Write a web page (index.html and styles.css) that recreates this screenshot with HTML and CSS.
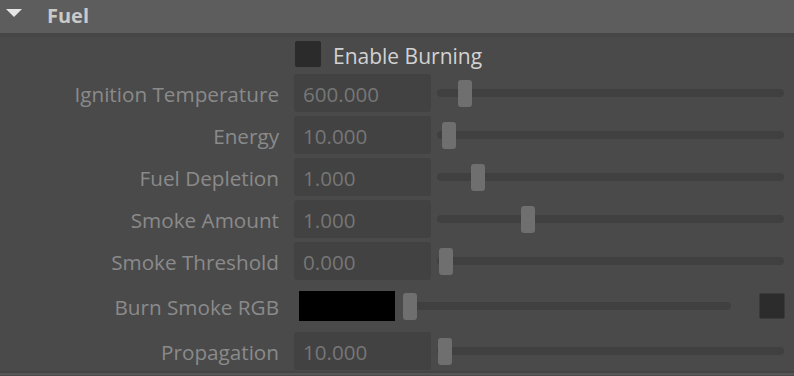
FILE: index.html
```html
<!DOCTYPE html>
<html>
<head>
<meta charset="utf-8">
<link rel="stylesheet" href="styles.css">
</head>
<body>
<div class="panel">
  <div class="header">
    <svg class="arrow" width="16" height="8" viewBox="0 0 16 8"><polygon points="0,0 16,0 8,8" fill="#e6e6e6"/></svg>
    <span class="title">Fuel</span>
  </div>
  <div class="body">
    <div class="check-row">
      <span class="checkbox"></span>
      <span class="check-label">Enable Burning</span>
    </div>
    <div class="rows">
      <div class="row">
        <span class="label">Ignition Temperature</span>
        <span class="field">600.000</span>
        <div class="slider"><span class="track"></span><span class="handle" style="left:21px"></span></div>
      </div>
      <div class="row">
        <span class="label">Energy</span>
        <span class="field">10.000</span>
        <div class="slider"><span class="track"></span><span class="handle" style="left:5px"></span></div>
      </div>
      <div class="row">
        <span class="label">Fuel Depletion</span>
        <span class="field">1.000</span>
        <div class="slider"><span class="track"></span><span class="handle" style="left:34px"></span></div>
      </div>
      <div class="row">
        <span class="label">Smoke Amount</span>
        <span class="field">1.000</span>
        <div class="slider"><span class="track"></span><span class="handle" style="left:84px"></span></div>
      </div>
      <div class="row">
        <span class="label">Smoke Threshold</span>
        <span class="field">0.000</span>
        <div class="slider"><span class="track"></span><span class="handle" style="left:2px"></span></div>
      </div>
      <div class="row color-row">
        <span class="label">Burn Smoke RGB</span>
        <div class="color-group">
          <span class="swatch"></span>
          <div class="slider color-slider"><span class="track"></span><span class="handle" style="left:0px"></span></div>
          <span class="map-btn"></span>
        </div>
      </div>
      <div class="row">
        <span class="label">Propagation</span>
        <span class="field">10.000</span>
        <div class="slider"><span class="track"></span><span class="handle" style="left:1px"></span></div>
      </div>
    </div>
  </div>
  <div class="footer"></div>
</div>
</body>
</html>
```

FILE: styles.css
```css
html, body {
  margin: 0;
  padding: 0;
  background: #4a4a4a;
}
.panel {
  width: 794px;
  height: 376px;
  overflow: hidden;
  font-family: "Open Sans", "Noto Sans", sans-serif;
}
.header {
  height: 33px;
  background: #5d5d5d;
  border-bottom: 4px solid #464646;
  display: flex;
  align-items: center;
}
.arrow {
  margin-left: 6px;
  margin-top: -8px;
}
.title {
  margin-left: 25px;
  font-weight: bold;
  font-size: 20px;
  color: #c9c9c9;
  margin-top: -2px;
}
.body {
  padding-top: 4px;
}
.check-row {
  display: flex;
  align-items: center;
  height: 26px;
  margin-left: 295px;
}
.checkbox {
  width: 26px;
  height: 26px;
  background: #2b2b2b;
  border-radius: 2px;
}
.check-label {
  margin-left: 12px;
  font-size: 21px;
  color: #d2d2d2;
  padding-top: 3px;
}
.rows {
  margin-top: 7px;
  display: flex;
  flex-direction: column;
  gap: 4px;
}
.row {
  display: grid;
  grid-template-columns: 279px 137px 347px;
  column-gap: 0;
  align-items: center;
  height: 38px;
}
.label {
  text-align: right;
  font-size: 20.7px;
  color: #8a8a8a;
  white-space: nowrap;
  padding-top: 2px;
}
.field {
  grid-column: 2;
  margin-left: 15px;
  width: 137px;
  height: 38px;
  box-sizing: border-box;
  background: #424242;
  border-radius: 3px;
  padding-left: 9px;
  padding-top: 1px;
  font-size: 20.6px;
  line-height: 38px;
  color: #767676;
}
.slider {
  position: relative;
  margin-left: 21px;
  height: 27px;
  width: 347px;
}
.track {
  position: absolute;
  left: 0;
  right: 0;
  top: 9px;
  height: 8px;
  border-radius: 4px;
  background: #404040;
}
.handle {
  position: absolute;
  top: 0;
  width: 14px;
  height: 27px;
  border-radius: 3px;
  background: #6f6f6f;
}
.color-row {
  height: 44px;
  grid-template-columns: 279px 1fr;
}
.color-group {
  display: flex;
  align-items: center;
  margin-left: 20px;
}
.swatch {
  width: 96px;
  height: 30px;
  background: #000;
}
.color-slider {
  margin-left: 8px;
  width: 328px;
}
.map-btn {
  margin-left: 28px;
  width: 26px;
  height: 26px;
  box-sizing: border-box;
  background: #2c2c2c;
  border: 1px solid #3a3a3a;
  border-radius: 2px;
}
.footer {
  margin-top: 1px;
  height: 2px;
  border-top: 2px solid #444;
  background: #565656;
}
```
